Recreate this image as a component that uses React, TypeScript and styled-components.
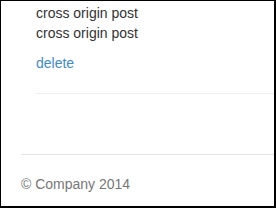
import React from "react";
import styled, { createGlobalStyle } from "styled-components";

const Global = createGlobalStyle`
  html, body { margin: 0; padding: 0; background: #fff; }
  body {
    font-family: "Liberation Sans", Arial, Helvetica, sans-serif;
    font-size: 14px;
    line-height: 20px;
    color: #333;
  }
`;

const Frame = styled.div`
  box-sizing: border-box;
  width: 276px;
  height: 208px;
  border-style: solid;
  border-color: #000;
  border-width: 1px 2px 2px 1px;
  overflow: hidden;
  background: #fff;
`;

const Container = styled.div`
  padding-left: 20px;
`;

const Post = styled.div`
  margin-left: 15px;
  padding-top: 2px;
`;

const Line = styled.p`
  margin: 0;
  line-height: 20px;
`;

const Actions = styled.p`
  margin: 10px 0 0;
  line-height: 20px;
`;

const DeleteLink = styled.a`
  color: #428bca;
  text-decoration: none;
  cursor: pointer;
`;

const Divider = styled.hr`
  margin: 20px 0 0;
  border: 0;
  border-top: 1px solid #eee;
`;

const Footer = styled.footer`
  margin-top: 60px;
  padding-top: 19px;
  border-top: 1px solid #e5e5e5;
  color: #777;
`;

const FooterText = styled.p`
  margin: 0;
  line-height: 20px;
`;

export default function App() {
  const posts = ["cross origin post", "cross origin post"];
  return (
    <>
      <Global />
      <Frame>
        <Container>
          <Post>
            {posts.map((p, i) => (
              <Line key={i}>{p}</Line>
            ))}
            <Actions>
              <DeleteLink>delete</DeleteLink>
            </Actions>
            <Divider />
          </Post>
          <Footer>
            <FooterText>© Company 2014</FooterText>
          </Footer>
        </Container>
      </Frame>
    </>
  );
}
